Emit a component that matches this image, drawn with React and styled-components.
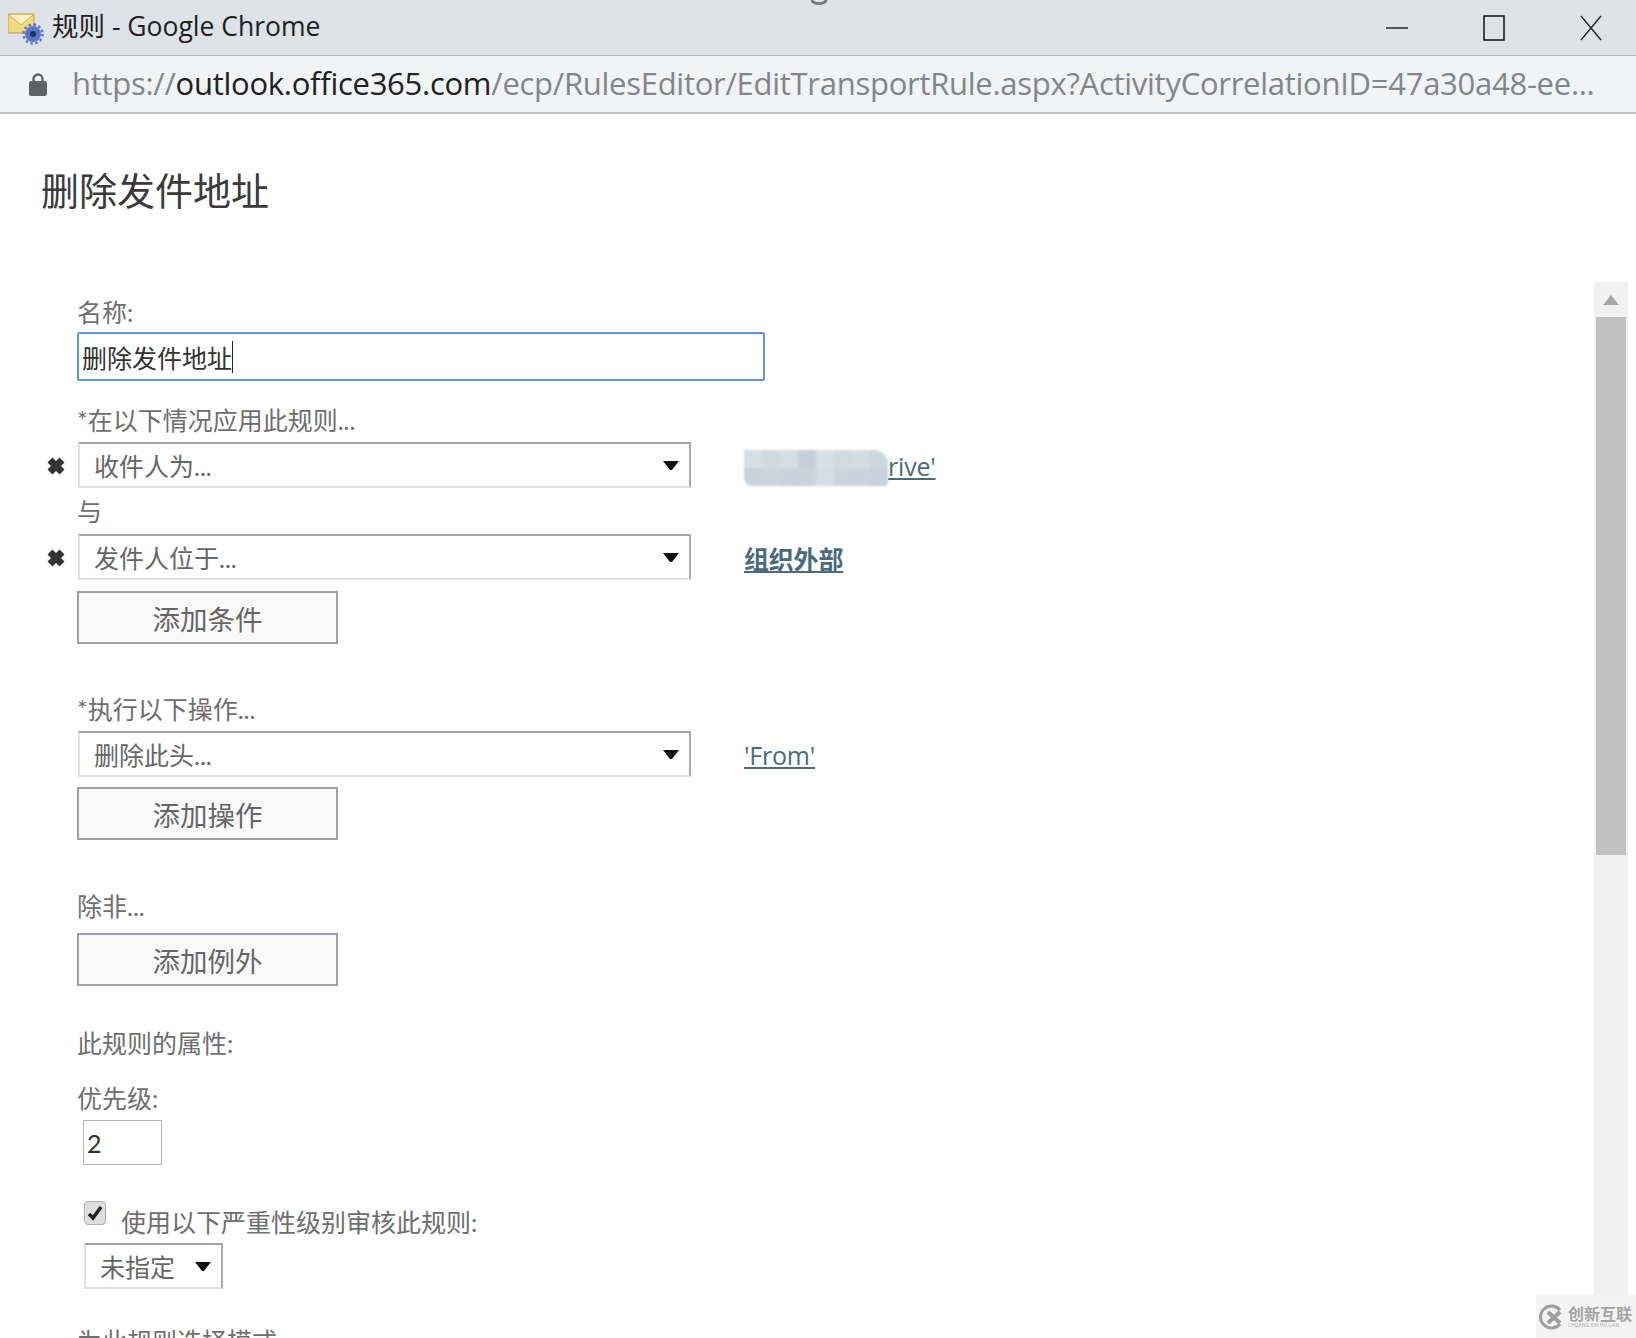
import styled, { createGlobalStyle } from "styled-components";

const cjk = `"Open Sans", "Noto Sans CJK SC", sans-serif`;
const formFont = `Lato, "Noto Sans CJK SC", sans-serif`;

const GlobalStyle = createGlobalStyle`
  html, body {
    margin: 0;
    padding: 0;
    background: #fff;
  }
`;

const Page = styled.div`
  position: relative;
  width: 1636px;
  height: 1338px;
  overflow: hidden;
  display: flex;
  flex-direction: column;
  font-family: ${cjk};
  color: #6e6e6e;
`;

const TitleBar = styled.div`
  height: 55px;
  flex: none;
  display: flex;
  align-items: center;
  padding: 0 34px 0 8px;
  background: #dee1e6;
  border-bottom: 1px solid #b4b6b9;
`;

const TitleText = styled.div`
  flex: 1;
  margin: 0 0 6px 8px;
  font-size: 26.5px;
  color: #1f1f1f;
`;

const WindowButtons = styled.div`
  display: flex;
  align-items: center;
  gap: 75px;
`;

const AddressBar = styled.div`
  height: 56px;
  flex: none;
  display: flex;
  align-items: center;
  padding-left: 29px;
  background: #f1f3f4;
  border-bottom: 2px solid #c6c6c6;
`;

const Url = styled.div`
  margin: 0 0 2px 25px;
  font-size: 31px;
  letter-spacing: -0.27px;
  white-space: nowrap;
  color: #80868b;
`;

const UrlHost = styled.span`
  color: #202124;
`;

const Heading = styled.h1`
  margin: 49px 0 0 41px;
  font-size: 38px;
  line-height: 54px;
  font-weight: 400;
  color: #3a3a3a;
`;

const Pane = styled.div`
  flex: 1;
  min-height: 0;
  display: flex;
  margin-top: 65px;
  padding-right: 8px;
`;

const Form = styled.div`
  flex: 1;
  padding: 12px 0 0 77px;
  font-family: ${formFont};
  font-size: 25px;
`;

const Scrollbar = styled.div`
  width: 34px;
  flex: none;
  background: #f1f1f1;
`;

const ScrollArrow = styled.div`
  height: 35px;
  display: flex;
  align-items: center;
  justify-content: center;
`;

const ScrollThumb = styled.div`
  height: 538px;
  margin: 0 2px;
  background: #c1c1c1;
`;

const Label = styled.div`
  font-size: 25px;
  line-height: 36px;
  margin-top: ${(p) => p.$top || 0}px;
  margin-bottom: ${(p) => p.$bottom || 0}px;
`;

const NameInput = styled.div`
  width: 688px;
  height: 49px;
  box-sizing: border-box;
  margin-top: 2px;
  display: flex;
  align-items: center;
  padding-left: 3px;
  border: 2px solid #5f94e0;
  border-radius: 2px;
  font-size: 25px;
  color: #333;
`;

const TextCaret = styled.span`
  width: 1px;
  height: 32px;
  background: #222;
`;

const Row = styled.div`
  display: flex;
  align-items: center;
  position: relative;
`;

const RemoveButton = styled.div`
  position: absolute;
  left: -32px;
  top: 13px;
  line-height: 0;
`;

const Select = styled.div`
  width: ${(p) => p.$width}px;
  height: 46px;
  margin-left: ${(p) => p.$left || 1}px;
  margin-top: ${(p) => p.$top || 0}px;
  box-sizing: border-box;
  display: flex;
  align-items: center;
  justify-content: space-between;
  padding: 0 9px 0 14px;
  border: 2px solid #e0e0e8;
  border-top-color: #a3a5aa;
  border-right-color: #a8aaaf;
  font-size: 25px;
  color: #666;
`;

const RuleLink = styled.a`
  display: flex;
  align-items: center;
  margin: 2px 0 0 53px;
  font-family: ${cjk};
  font-size: 25px;
  letter-spacing: -0.2px;
  font-weight: ${(p) => (p.$bold ? 700 : 500)};
  color: #4a6b7e;
  text-decoration: underline;
`;

const HiddenValue = styled.span`
  display: flex;
  flex-wrap: wrap;
  width: 144px;
  height: 36px;
  margin-top: 3px;
  border-radius: 0 14px 4px 8px;
  overflow: hidden;
  filter: blur(1px);
`;

const HiddenTile = styled.span`
  width: 18px;
  height: 18px;
  background: ${(p) => p.$color};
`;

const AddButton = styled.div`
  width: 261px;
  height: 53px;
  box-sizing: border-box;
  margin-top: ${(p) => p.$top}px;
  display: flex;
  align-items: center;
  justify-content: center;
  background: #f9f9f9;
  border: 2px solid #9aa0a6;
  font-size: 27.5px;
  color: #666;
`;

const NumberBox = styled.div`
  width: 79px;
  height: 45px;
  box-sizing: border-box;
  margin: 4px 0 0 6px;
  display: flex;
  align-items: center;
  padding-left: 3px;
  border: 1px solid #b4b4b4;
  font-size: 25px;
  color: #333;
`;

const CheckRow = styled.div`
  display: flex;
  align-items: flex-start;
  margin: 36px 0 0 7px;
`;

const CheckBox = styled.div`
  width: 22px;
  height: 24px;
  box-sizing: border-box;
  display: flex;
  align-items: center;
  justify-content: center;
  background: #dedede;
  border: 1px solid #b0b0b0;
  border-radius: 4px;
`;

const CheckLabel = styled.div`
  margin: 3px 0 0 15px;
  line-height: 36px;
`;

const Watermark = styled.div`
  position: absolute;
  right: 0;
  bottom: 0;
  width: 100px;
  height: 43px;
  display: flex;
  align-items: center;
  gap: 3px;
  padding-left: 3px;
  box-sizing: border-box;
  background: #f3f3f3;
`;

const WatermarkText = styled.div`
  color: #a4a4a4;
  font-size: 16px;
  line-height: 16px;
  font-weight: 700;
`;

const WatermarkSub = styled.div`
  font-size: 5px;
  line-height: 6px;
  font-weight: 400;
  white-space: nowrap;
`;

const TopArc = styled.svg`
  position: absolute;
  left: 810px;
  top: 0;
`;

const Caret = () => (
  <svg width="18" height="11" viewBox="0 0 18 11">
    <path d="M1 1 H17 L10 10 H8 Z" fill="#111" />
  </svg>
);

const Cross = () => (
  <svg width="22" height="22" viewBox="0 0 22 22">
    <path d="M5 5 L17 17 M17 5 L5 17" stroke="#333" strokeWidth="7" />
  </svg>
);

const MailIcon = () => (
  <svg width="36" height="36" viewBox="0 0 36 36">
    <rect x="0" y="4" width="26" height="19" rx="1" fill="#f1db7d" stroke="#b59d4c" />
    <path d="M1 5 L13 15 L25 5" fill="#fbf3c4" stroke="#c9ae5a" />
    <circle cx="25" cy="24" r="8" fill="#5a75c8" />
    <circle cx="25" cy="24" r="9.5" fill="none" stroke="#5a75c8" strokeWidth="2.5" strokeDasharray="2.5 2.5" />
    <circle cx="25" cy="24" r="3" fill="#26305c" />
  </svg>
);

const hiddenShades = [
  "#d5e0e3", "#cfdadf", "#d3dee2", "#c4d1d9", "#d6e0e3", "#d0dbe0", "#d2dde1", "#cbd7dd",
  "#c6d3da", "#c9d5db", "#c7d3da", "#c8d4da", "#d3dee2", "#c9d5dc", "#c8d4db", "#c5d2d9",
];

const App = () => {
  return (
    <Page>
      <GlobalStyle />
      <TitleBar>
        <MailIcon />
        <TitleText>规则 - Google Chrome</TitleText>
        <WindowButtons>
          <svg width="22" height="26" viewBox="0 0 22 26">
            <path d="M0 13 H22" stroke="#222" strokeWidth="1.5" />
          </svg>
          <svg width="22" height="26" viewBox="0 0 22 26">
            <rect x="1" y="1" width="20" height="24" fill="none" stroke="#111" strokeWidth="1.5" />
          </svg>
          <svg width="22" height="26" viewBox="0 0 22 26">
            <path d="M1 1 L21 25 M21 1 L1 25" stroke="#222" strokeWidth="1.4" />
          </svg>
        </WindowButtons>
      </TitleBar>
      <AddressBar>
        <svg width="18" height="24" viewBox="0 0 18 24">
          <path d="M4.5 10 V7 a4.5 4.5 0 0 1 9 0 V10" fill="none" stroke="#5f6368" strokeWidth="2.4" />
          <rect x="0" y="9" width="18" height="15" rx="2" fill="#5f6368" />
        </svg>
        <Url>
          https://<UrlHost>outlook.office365.com</UrlHost>/ecp/RulesEditor/EditTransportRule.aspx?ActivityCorrelationID=47a30a48-ee...
        </Url>
      </AddressBar>
      <Heading>删除发件地址</Heading>
      <Pane>
        <Form>
          <Label>名称:</Label>
          <NameInput>
            删除发件地址
            <TextCaret />
          </NameInput>
          <Label $top={21} $bottom={4}>*在以下情况应用此规则...</Label>
          <Row>
            <RemoveButton>
              <Cross />
            </RemoveButton>
            <Select $width={613}>
              收件人为...
              <Caret />
            </Select>
            <RuleLink>
              <HiddenValue>
                {hiddenShades.map((color, i) => (
                  <HiddenTile key={i} $color={color} />
                ))}
              </HiddenValue>
              rive'
            </RuleLink>
          </Row>
          <Label $top={5} $bottom={5}>与</Label>
          <Row>
            <RemoveButton>
              <Cross />
            </RemoveButton>
            <Select $width={613}>
              发件人位于...
              <Caret />
            </Select>
            <RuleLink $bold>组织外部</RuleLink>
          </Row>
          <AddButton $top={11}>添加条件</AddButton>
          <Label $top={47} $bottom={4}>*执行以下操作...</Label>
          <Row>
            <Select $width={613}>
              删除此头...
              <Caret />
            </Select>
            <RuleLink>'From'</RuleLink>
          </Row>
          <AddButton $top={10}>添加操作</AddButton>
          <Label $top={48}>除非...</Label>
          <AddButton $top={9}>添加例外</AddButton>
          <Label $top={39}>此规则的属性:</Label>
          <Label $top={19}>优先级:</Label>
          <NumberBox>2</NumberBox>
          <CheckRow>
            <CheckBox>
              <svg width="18" height="18" viewBox="0 0 18 18">
                <path d="M3 10 L7 14 L15 3" fill="none" stroke="#222" strokeWidth="3.5" />
              </svg>
            </CheckBox>
            <CheckLabel>使用以下严重性级别审核此规则:</CheckLabel>
          </CheckRow>
          <Select $width={139} $left={7} $top={3}>
            未指定
            <Caret />
          </Select>
          <Label $top={34}>为此规则选择模式:</Label>
        </Form>
        <Scrollbar>
          <ScrollArrow>
            <svg width="16" height="10" viewBox="0 0 16 10">
              <path d="M8 0 L16 10 H0 Z" fill="#a6a6a6" />
            </svg>
          </ScrollArrow>
          <ScrollThumb />
        </Scrollbar>
      </Pane>
      <TopArc width="18" height="5" viewBox="0 0 18 5">
        <path d="M2 0 a7 3.5 0 0 0 14 0" fill="none" stroke="#77797c" strokeWidth="3" />
      </TopArc>
      <Watermark>
        <svg width="26" height="26" viewBox="0 0 26 26">
          <path d="M21 6 A11 11 0 1 0 21 20" fill="none" stroke="#9d9d9d" strokeWidth="3" />
          <path d="M9 8 L21 19 M21 8 L9 19" stroke="#9d9d9d" strokeWidth="4" />
        </svg>
        <WatermarkText>
          创新互联
          <WatermarkSub>CHUANG XIN HU LIAN</WatermarkSub>
        </WatermarkText>
      </Watermark>
    </Page>
  );
};

export default App;
